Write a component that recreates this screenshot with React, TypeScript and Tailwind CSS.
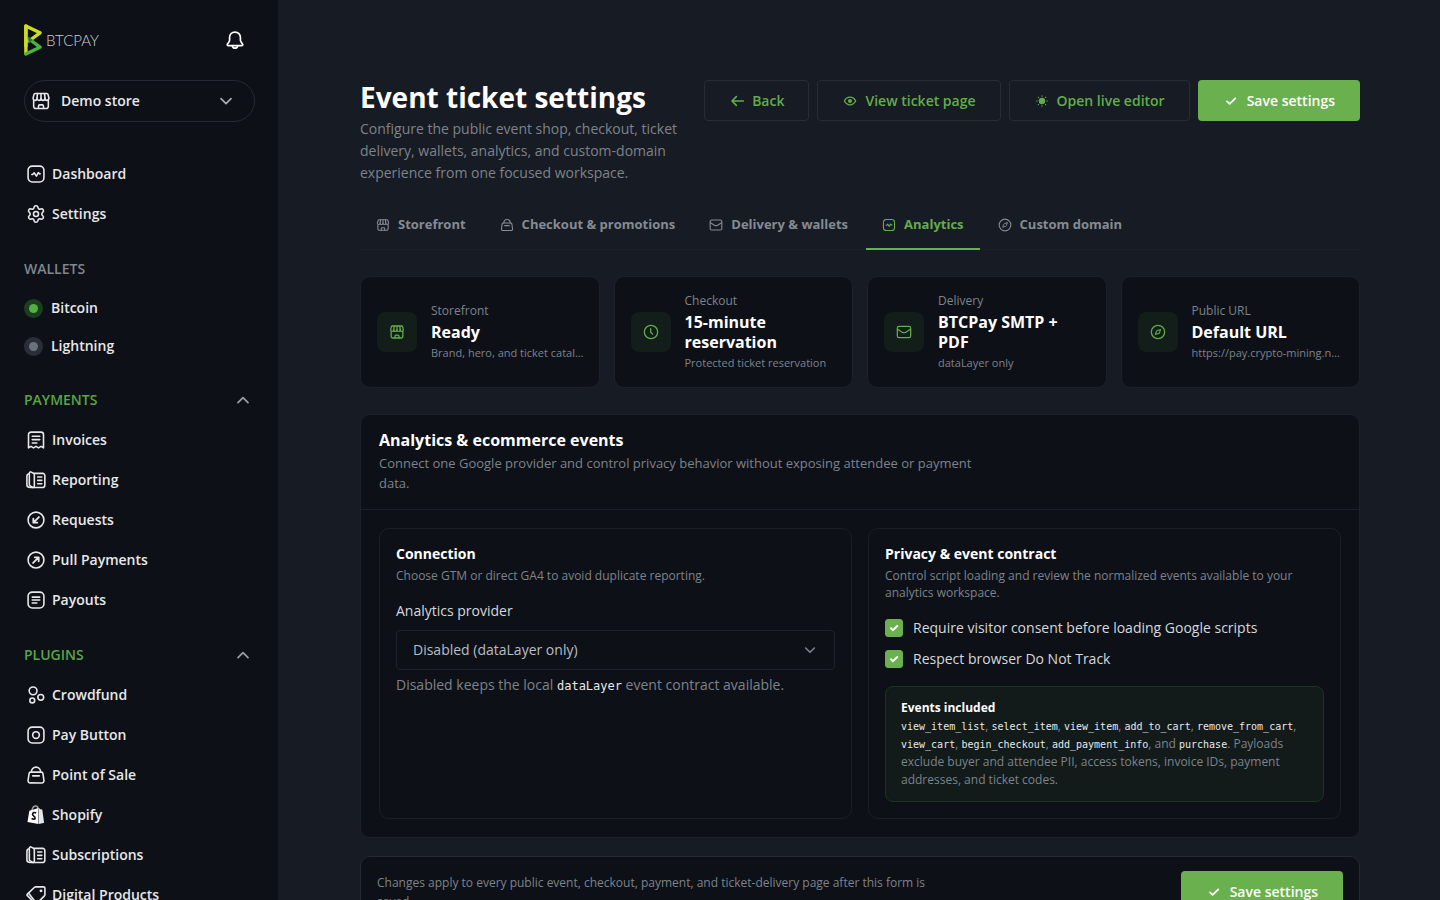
import React, { useState } from "react";
import { Settings } from "lucide-react";

type IconProps = { className?: string; strokeWidth?: number };

function Svg({ className = "size-5", strokeWidth = 1.9, children }: IconProps & { children: React.ReactNode }) {
  return (
    <svg
      viewBox="0 0 24 24"
      fill="none"
      stroke="currentColor"
      strokeWidth={strokeWidth}
      strokeLinecap="round"
      strokeLinejoin="round"
      aria-hidden="true"
      className={`shrink-0 ${className}`}
    >
      {children}
    </svg>
  );
}

const StoreIcon = (p: IconProps) => (
  <Svg {...p}>
    <path d="M5.200 3h13.600c.9 0 1.500.5 1.700 1.400L21.500 8.500c0 1.700-1 2.700-2.400 2.700s-2.300-1-2.300-2.500c0 1.500-1 2.500-2.400 2.500S12 10.200 12 8.700c0 1.500-1 2.500-2.400 2.500s-2.400-1-2.400-2.500c0 1.500-.9 2.500-2.300 2.500s-2.400-1-2.400-2.700l1-4.100C3.700 3.500 4.300 3 5.200 3Z" />
    <path d="M7.800 3.200 7.200 8.500M12 3.200v5.300M16.200 3.200l.6 5.300M3.200 11.500v7a2.500 2.500 0 0 0 2.500 2.500h12.600a2.500 2.500 0 0 0 2.500-2.500v-7" />
    <path d="M9 20.800v-2.600c0-1 .6-1.600 1.500-1.600h3c.9 0 1.500.6 1.500 1.600v2.600" />
  </Svg>
);
const PulseIcon = (p: IconProps) => (
  <Svg {...p}>
    <rect x="2.500" y="2.500" width="19" height="19" rx="5" />
    <path d="M7 12.500h1l1.800-2 2.700 4 2.300-4.200 1.300 1.500h.9" />
  </Svg>
);
const GearIcon = ({ className = "size-5" }: IconProps) => <Settings aria-hidden="true" strokeWidth={1.900} className={`shrink-0 ${className}`} />;
const InvoiceIcon = (p: IconProps) => (
  <Svg {...p}>
    <path d="M3 21.500V5.500a3 3 0 0 1 3-3h12a3 3 0 0 1 3 3v16l-3-1.800-3 1.800-3-1.800-3 1.800-3-1.800-3 1.800Z" />
    <path d="M7.500 7.500h9M7.500 11.500h9M7.500 15.500h5.500" />
  </Svg>
);
const ReportIcon = (p: IconProps) => (
  <Svg {...p}>
    <path d="M10 4h10a2.600 2.600 0 0 1 2.600 2.600v11.800A2.600 2.600 0 0 1 20 21H6" />
    <path d="M6.300 2.500 8.900 3.900c.7.400 1.100 1 1.100 1.800v13.600c0 1.300-1.200 2-2.300 1.400l-2.600-1.500c-.7-.4-1.100-1-1.100-1.800V3.900c0-1.300 1.200-2 2.300-1.400Z" />
    <path d="M3.800 4.600C2 4.900 1.100 5.800 1.100 7.500v10.600C1.100 20 2.500 21 5.500 21" />
    <path d="M14 8.300h5M14 12.400h5M14 16.500h5" />
  </Svg>
);
const RequestIcon = (p: IconProps) => (
  <Svg {...p}>
    <circle cx="12" cy="12" r="9.500" />
    <path d="m15.500 8.500-5.700 5.700M8.800 10.500v4.700h4.700" strokeWidth="2.200" />
  </Svg>
);
const PullIcon = (p: IconProps) => (
  <Svg {...p}>
    <circle cx="12" cy="12" r="9.500" />
    <path d="m8.500 15.500 5.700-5.700M10.500 8.800h4.700v4.700" strokeWidth="2.200" />
  </Svg>
);
const PayoutIcon = (p: IconProps) => (
  <Svg {...p}>
    <rect x="2.500" y="2.500" width="19" height="19" rx="5" />
    <path d="M7.500 8.500h9M7.500 12h9M7.500 15.500h5.500" />
  </Svg>
);
const CrowdIcon = (p: IconProps) => (
  <Svg {...p}>
    <circle cx="8.500" cy="7" r="4.700" />
    <circle cx="17.700" cy="14.800" r="3.500" />
    <circle cx="7.500" cy="18.500" r="2.900" />
  </Svg>
);
const PayButtonIcon = (p: IconProps) => (
  <Svg {...p}>
    <rect x="2.500" y="2.500" width="19" height="19" rx="5" />
    <circle cx="12" cy="12" r="4" />
  </Svg>
);
const BagIcon = (p: IconProps) => (
  <Svg {...p}>
    <path d="M5.500 8.500h13c1 0 1.600.5 1.800 1.500l1.200 8.500a2.600 2.600 0 0 1-2.600 3H5.100a2.600 2.600 0 0 1-2.600-3L3.700 10c.2-1 .8-1.500 1.800-1.500Z" />
    <path d="M6.500 8.500c0-3.500 2.300-6 5.500-6s5.500 2.500 5.500 6M8 13h8" />
  </Svg>
);
const ShopifyIcon = ({ className = "size-5" }: IconProps) => (
  <svg viewBox="0 0 24 24" aria-hidden="true" className={`shrink-0 ${className}`}>
    <path d="M7 7c.6-3.500 2.600-5.800 4.900-5.800 1.700 0 2.600 1.600 2.700 4" fill="none" stroke="#9aa0a6" strokeWidth="1.800" />
    <path d="m4 6.800 11-3.100V22.800L1.800 20.300 4 6.800Z" fill="#fff" />
    <path d="m15.600 3.700 1.600 1.500 2.300.3 2.200 15.800-6.100 1.500V3.700Z" fill="#e4e6e8" />
    <path d="M12.200 9.500c-2-1.100-4.300-.3-4.300 1.600 0 2.100 3 2.300 3 4.400 0 1.700-2.200 2-4.200.6" fill="none" stroke="#0d1117" strokeWidth="2" />
  </svg>
);
const TagIcon = (p: IconProps) => (
  <Svg {...p}>
    <path d="M12 2.200h9c1 0 1.700.7 1.700 1.700v7.400c0 .9-.3 1.500-.9 2.100l-8.700 8.700c-.7.700-1.500.7-2.200 0L1.700 12.800c-.6-.6-.6-1.300 0-1.900L9.900 3c.6-.5 1.200-.8 2.100-.8Z" />
    <path d="m3 9.700 8.500 11" />
    <circle cx="18" cy="7" r=".8" fill="currentColor" />
  </Svg>
);
const MailIcon = (p: IconProps) => (
  <Svg {...p}>
    <rect x="2" y="3.500" width="20" height="17" rx="2.500" />
    <path d="m2.500 8 6.800 4.300c1.700 1 3.700 1 5.400 0L21.500 8" />
  </Svg>
);
const CompassIcon = (p: IconProps) => (
  <Svg {...p}>
    <circle cx="12" cy="12" r="10" />
    <path d="m15.800 8.200-1.500 5a2 2 0 0 1-1.200 1.200l-5 1.400 1.600-4.900a2 2 0 0 1 1.200-1.200l4.900-1.500Z" strokeWidth="1.600" />
  </Svg>
);
const ClockIcon = (p: IconProps) => (
  <Svg {...p}>
    <circle cx="12" cy="12" r="10" />
    <path d="M11.500 7v5.500l2.800 2.500" />
  </Svg>
);
const BellIcon = (p: IconProps) => (
  <Svg {...p}>
    <path d="M12 2.500c-3.900 0-6.500 2.900-6.500 6.500v3.300c0 1-.4 1.700-1.200 2.700L3 16.800c-.7 1-.2 1.900 1 1.900h16c1.200 0 1.700-.9 1-1.900L19.700 15c-.8-1-1.200-1.700-1.200-2.700V9c0-3.600-2.600-6.500-6.500-6.500Z" />
    <path d="M8.800 19c.2 1.700 1.500 2.800 3.200 2.800s3-1.100 3.200-2.800" />
  </Svg>
);
const ChevronIcon = ({ className = "size-4", up = false }: { className?: string; up?: boolean }) => (
  <Svg className={className} strokeWidth={2.6}>
    <path d={up ? "m4.500 16 7.500-7.500 7.500 7.500" : "m4.500 8.500 7.500 7.500 7.500-7.500"} />
  </Svg>
);
const BackIcon = (p: IconProps) => (
  <Svg {...p} strokeWidth={2.400}>
    <path d="M21.500 12H5M11 5.500 4.500 12l6.500 6.500" />
  </Svg>
);
const EyeIcon = (p: IconProps) => (
  <Svg {...p} strokeWidth={2}>
    <path d="M3.500 12c2-3.700 5-5.700 8.500-5.700s6.500 2 8.500 5.700c-2 3.700-5 5.700-8.500 5.700s-6.500-2-8.500-5.700Z" />
    <circle cx="12" cy="12" r="2" fill="currentColor" />
  </Svg>
);
const SunIcon = (p: IconProps) => (
  <Svg {...p} strokeWidth={1.600}>
    <circle cx="12" cy="12" r="4" fill="currentColor" />
    <path d="M12 4v.8M12 19.200v.8M4 12h.8M19.200 12h.8M6.300 6.300l.5.500M17.200 17.200l.5.500M6.300 17.700l.5-.5M17.200 6.800l.5-.5" />
  </Svg>
);
const CheckIcon = ({ className = "size-4", strokeWidth = 2.6 }: IconProps) => (
  <Svg className={className} strokeWidth={strokeWidth}>
    <path d="m6 12.500 4 3.800L18.500 8" />
  </Svg>
);

function Logo() {
  return (
    <a href="#home" aria-label="BTCPay" className="flex items-center gap-1">
      <svg viewBox="0 0 18 32" className="h-8 w-[18px]" fill="none" strokeWidth="3.400" strokeLinejoin="round" strokeLinecap="round" aria-hidden="true">
        <path d="M1.900 29.500V2L16 8.800 5 17" stroke="#cedc21" />
        <path d="M1.900 30 16 23.200 5 15" stroke="#51b13e" />
        <path d="M1.900 22V2" stroke="#cedc21" />
        <path d="M4.500 12.800v6.400L8.700 16l-4.200-3.200Z" fill="#1e7a44" stroke="none" />
      </svg>
      <span className="font-['Lato'] text-[15px] leading-5 font-light text-[#c9cdd2]">BTCPAY</span>
    </a>
  );
}

type NavEntry = { label: string; icon: (p: IconProps) => React.ReactElement };

function NavList({ items }: { items: NavEntry[] }) {
  return (
    <ul>
      {items.map(({ label, icon: Icon }) => (
        <li key={label}>
          <a href="#nav" className="flex h-10 items-center gap-1.5 pl-[2px] font-semibold text-[#e6e8ea]">
            <Icon className="size-5" />
            {label}
          </a>
        </li>
      ))}
    </ul>
  );
}

function SectionToggle({ label }: { label: string }) {
  return (
    <button type="button" className="mt-[15px] flex h-10 w-full items-center justify-between pr-1 font-semibold text-[#5aa544]">
      {label}
      <ChevronIcon up className="size-4 text-[#9a9fa6]" />
    </button>
  );
}

function Wallet({ label, on }: { label: string; on?: boolean }) {
  return (
    <li>
      <a href="#wallet" className="flex h-[38px] items-center gap-2 font-semibold text-[#e6e8ea]">
        <span className={`flex size-[19px] items-center justify-center rounded-full ${on ? "bg-[#1d3d20]" : "bg-[#2a2f37]"}`}>
          <span className={`size-[9px] rounded-full ${on ? "bg-[#51b13e]" : "bg-[#6b727c]"}`} />
        </span>
        {label}
      </a>
    </li>
  );
}

function Sidebar() {
  return (
    <aside className="sticky top-0 h-screen w-[278px] shrink-0 overflow-y-auto bg-[#0d1017] pr-[23px] pl-6 text-sm [scrollbar-width:none]">
      <div className="flex h-20 items-center justify-between pr-[10px]">
        <Logo />
        <button type="button" aria-label="Notifications" className="text-white">
          <BellIcon className="size-5" strokeWidth={2} />
        </button>
      </div>
      <button
        type="button"
        className="flex h-[42px] w-full items-center rounded-full border border-[#242932] pr-5 pl-[6px] font-semibold text-[#e6e8ea]"
      >
        <StoreIcon className="size-5" />
        <span className="ml-[10px] flex-1 text-left">Demo store</span>
        <ChevronIcon className="size-4 text-[#a6abb2]" />
      </button>
      <nav aria-label="Main" className="pt-8">
        <NavList items={[{ label: "Dashboard", icon: PulseIcon }, { label: "Settings", icon: GearIcon }]} />
        <h2 className="mt-[15px] flex h-10 items-center font-semibold text-[#80868f]">WALLETS</h2>
        <ul>
          <Wallet label="Bitcoin" on />
          <Wallet label="Lightning" />
        </ul>
        <SectionToggle label="PAYMENTS" />
        <NavList
          items={[
            { label: "Invoices", icon: InvoiceIcon },
            { label: "Reporting", icon: ReportIcon },
            { label: "Requests", icon: RequestIcon },
            { label: "Pull Payments", icon: PullIcon },
            { label: "Payouts", icon: PayoutIcon },
          ]}
        />
        <SectionToggle label="PLUGINS" />
        <NavList
          items={[
            { label: "Crowdfund", icon: CrowdIcon },
            { label: "Pay Button", icon: PayButtonIcon },
            { label: "Point of Sale", icon: BagIcon },
            { label: "Shopify", icon: ShopifyIcon },
            { label: "Subscriptions", icon: ReportIcon },
            { label: "Digital Products", icon: TagIcon },
          ]}
        />
      </nav>
    </aside>
  );
}

const outlineButton =
  "flex h-[41px] items-center gap-[7px] rounded border border-[#282d35] px-6 text-sm font-semibold whitespace-nowrap text-[#62ad4c]";

function SaveButton() {
  return (
    <button type="submit" className="flex h-[41px] shrink-0 items-center gap-2 rounded bg-[#6bb04e] px-[25px] text-sm font-semibold whitespace-nowrap text-white">
      <CheckIcon />
      Save settings
    </button>
  );
}

const tabs: NavEntry[] = [
  { label: "Storefront", icon: StoreIcon },
  { label: "Checkout & promotions", icon: BagIcon },
  { label: "Delivery & wallets", icon: MailIcon },
  { label: "Analytics", icon: PulseIcon },
  { label: "Custom domain", icon: CompassIcon },
];

const stats = [
  { label: "Storefront", value: "Ready", note: "Brand, hero, and ticket catalog", icon: StoreIcon },
  { label: "Checkout", value: "15-minute reservation", note: "Protected ticket reservation", icon: ClockIcon },
  { label: "Delivery", value: "BTCPay SMTP + PDF", note: "dataLayer only", icon: MailIcon },
  { label: "Public URL", value: "Default URL", note: "https://pay.crypto-mining.network", icon: CompassIcon },
];

function Check({ id, label }: { id: string; label: string }) {
  const [checked, setChecked] = useState(true);
  return (
    <div className="flex h-[22px] items-center gap-[10px]">
      <span className="grid size-[18px] shrink-0 place-items-center">
        <input
          id={id}
          type="checkbox"
          checked={checked}
          onChange={(e) => setChecked(e.target.checked)}
          className="peer col-start-1 row-start-1 size-[18px] appearance-none rounded-[3px] border border-[#30363d] checked:border-[#6bb04e] checked:bg-[#6bb04e]"
        />
        <CheckIcon className="pointer-events-none invisible col-start-1 row-start-1 size-3 text-white peer-checked:visible" strokeWidth={4} />
      </span>
      <label htmlFor={id} className="text-sm text-[#d5d8dc]">
        {label}
      </label>
    </div>
  );
}

const Code = ({ children }: { children: string }) => (
  <code className="font-['DejaVu_Sans_Mono',monospace] text-[10px] leading-none text-[#e6e8ea]">{children}</code>
);

export default function App() {
  return (
    <div className="flex min-h-screen bg-[#171b23] font-['Open_Sans',sans-serif] text-[#e6e8ea]">
      <Sidebar />
      <main className="min-w-0 flex-1 pt-20 pr-20 pb-10 pl-[82px]">
        <form onSubmit={(e) => e.preventDefault()}>
          <header className="flex items-start justify-between gap-6">
            <div className="max-w-[320px]">
              <h1 className="text-[28px] leading-[34px] font-bold whitespace-nowrap text-white">Event ticket settings</h1>
              <p className="mt-1 text-sm leading-[22px] text-[#7d838c]">
                Configure the public event shop, checkout, ticket delivery, wallets, analytics, and custom-domain experience from one focused workspace.
              </p>
            </div>
            <div className="flex shrink-0 gap-2">
              <a href="#back" className={outlineButton}>
                <BackIcon className="size-4" />
                Back
              </a>
              <a href="#ticket" className={outlineButton}>
                <EyeIcon className="size-4" />
                View ticket page
              </a>
              <a href="#editor" className={outlineButton}>
                <SunIcon className="size-4" />
                Open live editor
              </a>
              <SaveButton />
            </div>
          </header>

          <nav aria-label="Settings sections" className="mt-[17px] flex gap-[2px] border-b border-[#1c2129]">
            {tabs.map(({ label, icon: Icon }) => (
              <a
                key={label}
                href="#tab"
                aria-current={label === "Analytics" ? "page" : undefined}
                className={`-mb-px flex h-[49px] items-center gap-2 border-b-2 px-4 text-[13px] font-bold whitespace-nowrap ${
                  label === "Analytics" ? "border-[#6bb04e] text-[#62ad4c]" : "border-transparent text-[#858b94]"
                }`}
              >
                <Icon className="size-[14px]" />
                {label}
              </a>
            ))}
          </nav>

          <section aria-label="Overview" className="mt-[26px] grid grid-cols-4 gap-[14px]">
            {stats.map(({ label, value, note, icon: Icon }) => (
              <article key={label} className="flex min-h-28 items-center gap-[14px] rounded-[10px] border border-[#1c2028] bg-[#0d1017] pr-[14px] pl-4">
                <span className="flex size-10 shrink-0 items-center justify-center rounded-lg bg-[#131d1a] text-[#62ad4c]">
                  <Icon className="size-4" />
                </span>
                <div className="min-w-0">
                  <p className="text-xs leading-4 text-[#7d838c]">{label}</p>
                  <p className="my-[3px] text-base leading-5 font-bold text-white">{value}</p>
                  <p className="truncate text-[11px] leading-4 text-[#7d838c]">{note}</p>
                </div>
              </article>
            ))}
          </section>

          <section className="mt-[26px] rounded-[10px] border border-[#1c2028] bg-[#0d1017]">
            <div className="border-b border-[#1c2028] px-[18px] pt-[15px] pb-4">
              <h2 className="text-base leading-5 font-bold text-white">Analytics &amp; ecommerce events</h2>
              <p className="mt-[3px] max-w-[600px] text-[13px] leading-5 text-[#7d838c]">
                Connect one Google provider and control privacy behavior without exposing attendee or payment data.
              </p>
            </div>
            <div className="grid grid-cols-2 gap-4 p-[18px]">
              <section className="rounded-[10px] border border-[#1a1e25] p-4">
                <h3 className="text-sm leading-[18px] font-bold text-white">Connection</h3>
                <p className="mt-1 text-xs leading-[17px] text-[#7d838c]">Choose GTM or direct GA4 to avoid duplicate reporting.</p>
                <label htmlFor="provider" className="mt-4 block text-sm leading-[22px] text-[#d5d8dc]">
                  Analytics provider
                </label>
                <div className="mt-2 grid items-center">
                  <select
                    id="provider"
                    className="col-start-1 row-start-1 h-10 w-full appearance-none rounded border border-[#1e232b] bg-[#0d1017] px-4 text-sm text-[#b9bdc4]"
                  >
                    <option>Disabled (dataLayer only)</option>
                    <option>Google Tag Manager</option>
                    <option>Google Analytics 4</option>
                  </select>
                  <ChevronIcon className="pointer-events-none col-start-1 row-start-1 mr-[18px] size-[14px] justify-self-end text-[#80868f]" />
                </div>
                <p className="mt-1 text-sm leading-[22px] text-[#7d838c]">
                  Disabled keeps the local{" "}
                  <code className="font-['DejaVu_Sans_Mono',monospace] text-xs leading-none text-[#e6e8ea]">dataLayer</code> event contract available.
                </p>
              </section>

              <section className="rounded-[10px] border border-[#1a1e25] p-4">
                <h3 className="text-sm leading-[18px] font-bold text-white">Privacy &amp; event contract</h3>
                <p className="mt-1 text-xs leading-[17px] text-[#7d838c]">
                  Control script loading and review the normalized events available to your analytics workspace.
                </p>
                <div className="mt-4 flex flex-col gap-[9px]">
                  <Check id="consent" label="Require visitor consent before loading Google scripts" />
                  <Check id="dnt" label="Respect browser Do Not Track" />
                </div>
                <div className="mt-4 rounded-lg border border-[#1e3222] bg-[#121a1a] px-[15px] py-3 text-xs leading-[18px] text-[#7d838c]">
                  <h4 className="font-bold text-white">Events included</h4>
                  <p>
                    <Code>view_item_list</Code>, <Code>select_item</Code>, <Code>view_item</Code>, <Code>add_to_cart</Code>,{" "}
                    <Code>remove_from_cart</Code>, <Code>view_cart</Code>, <Code>begin_checkout</Code>, <Code>add_payment_info</Code>, and{" "}
                    <Code>purchase</Code>. Payloads exclude buyer and attendee PII, access tokens, invoice IDs, payment addresses, and ticket codes.
                  </p>
                </div>
              </section>
            </div>
          </section>

          <footer className="mt-[18px] flex items-center justify-between rounded-[10px] border border-[#242932] bg-[#0d1017] px-4 py-[14px]">
            <p className="max-w-[560px] text-xs leading-[19px] text-[#7d838c]">
              Changes apply to every public event, checkout, payment, and ticket-delivery page after this form is saved.
            </p>
            <SaveButton />
          </footer>
        </form>
      </main>
    </div>
  );
}
